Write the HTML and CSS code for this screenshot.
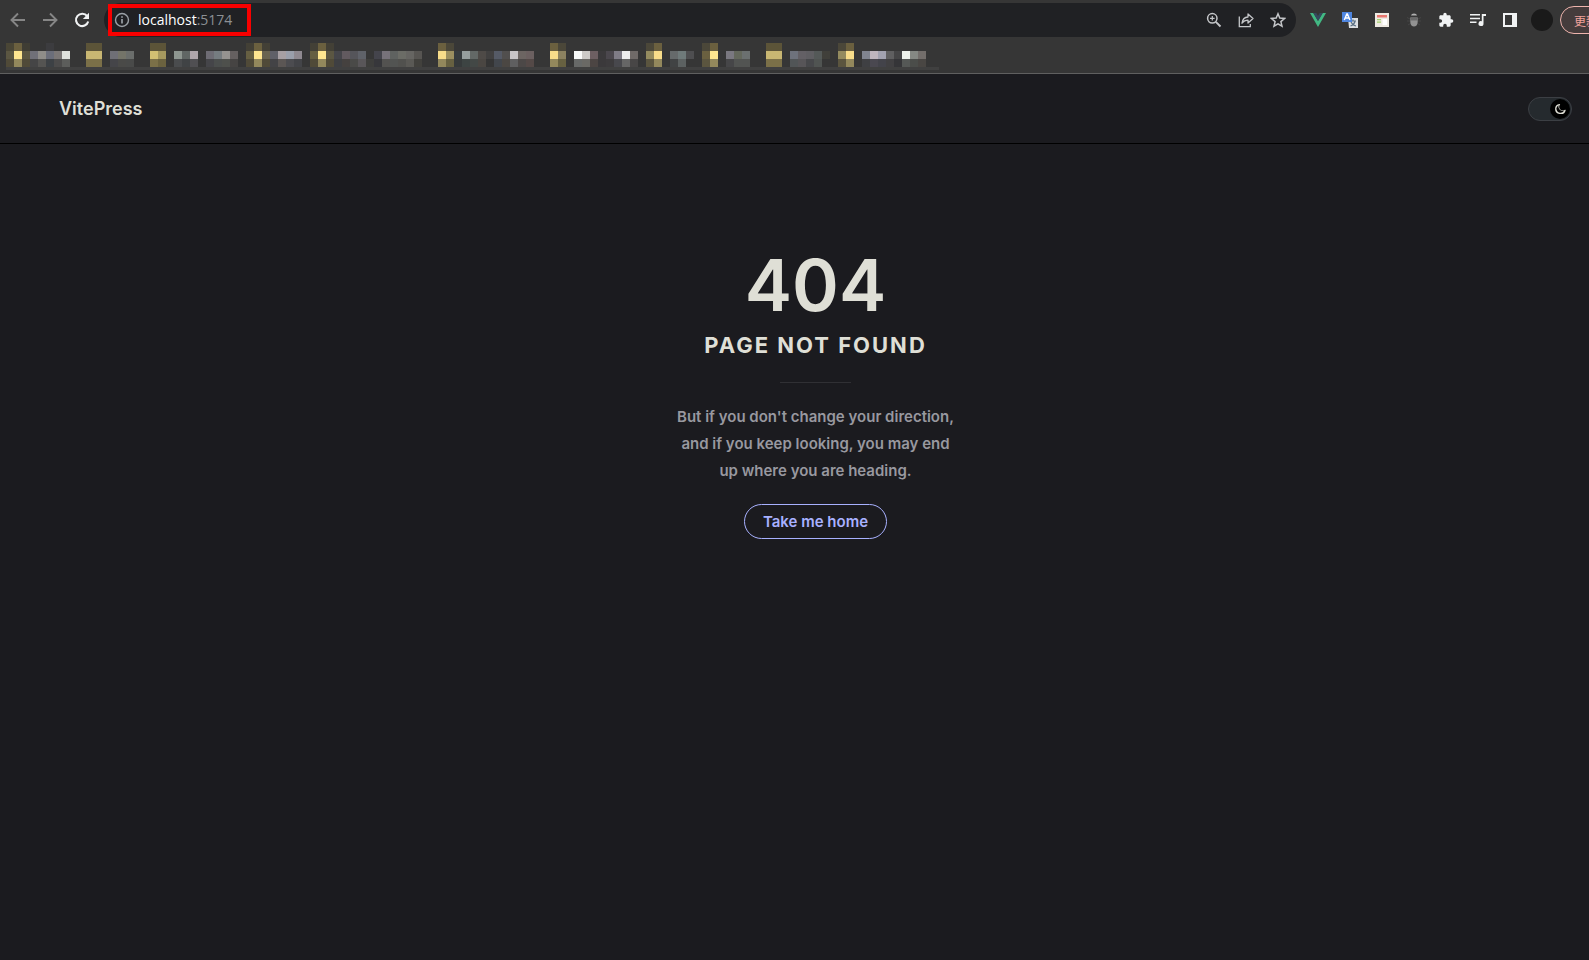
FILE: index.html
```html
<!DOCTYPE html>
<html lang="en">
<head>
<meta charset="utf-8">
<title>404 | VitePress</title>
<link rel="stylesheet" href="styles.css">
</head>
<body>
<div class="browser">
  <div class="toolbar">
    <div class="group history">
      <button class="tool dim" aria-label="Back"><svg viewBox="0 0 16 16"><path d="M15 8H2M8 1.5 1.5 8 8 14.500" fill="none" stroke="currentColor" stroke-width="1.900"/></svg></button>
      <button class="tool dim" aria-label="Forward"><svg viewBox="0 0 16 16"><path d="M1 8h13M8 1.500 14.500 8 8 14.500" fill="none" stroke="currentColor" stroke-width="1.900"/></svg></button>
      <button class="tool bright" aria-label="Reload"><svg viewBox="0 0 16 16"><path d="M13.200 4.200A6.200 6.200 0 1 0 14.200 9.500" fill="none" stroke="currentColor" stroke-width="2.100"/><path d="M15 .8V7H8.800z" fill="currentColor"/></svg></button>
    </div>
    <div class="address">
      <span class="site"><svg viewBox="0 0 16 16"><circle cx="8" cy="8" r="6.500" fill="none" stroke="currentColor" stroke-width="1.400"/><path d="M8 7v4.600M8 4.200v1.600" stroke="currentColor" stroke-width="1.700"/></svg></span>
      <a class="url" href="#">localhost<span class="port">:5174</span></a>
      <span class="highlight"></span>
      <button class="tool soft" aria-label="Zoom"><svg viewBox="0 0 16 16"><circle cx="6.300" cy="6.300" r="4.700" fill="none" stroke="currentColor" stroke-width="1.500"/><path d="m9.800 9.800 4.700 4.700" stroke="currentColor" stroke-width="1.900"/><path d="M6.300 4v4.600M4 6.300h4.600" stroke="currentColor" stroke-width="1.200"/></svg></button>
      <button class="tool soft" aria-label="Share"><svg viewBox="0 0 16 16"><path d="M1.300 4.500v10.200h11V12" fill="none" stroke="currentColor" stroke-width="1.300"/><path d="M4 11.200C4.500 7.500 6.500 5.200 10 5V2l5 4.500L10 11V8.200c-2.700 0-4.500 1-6 3z" fill="none" stroke="currentColor" stroke-width="1.300" stroke-linejoin="round"/></svg></button>
      <button class="tool soft" aria-label="Bookmark"><svg viewBox="0 0 16 16"><path d="m8 1.800 1.800 4.300 4.700.4-3.600 3.100 1.100 4.600L8 11.800l-4 2.400 1.100-4.600-3.600-3.100 4.700-.4z" fill="none" stroke="currentColor" stroke-width="1.500"/></svg></button>
    </div>
    <div class="group">
      <button class="tool" aria-label="Vue devtools"><svg viewBox="0 0 16 16"><path d="M0 1h3.300L8 9l4.700-8H16L8 15z" fill="#42b883"/><path d="M3.300 1h3L8 4l1.700-3h3L8 9z" fill="#35495e"/></svg></button>
      <button class="tool" aria-label="Translate"><svg viewBox="0 0 16 16"><path d="M6 6h10v10H7z" fill="#dcdfe2"/><path d="M8 9h6M11 7.500V9m2 .5c-.5 2-2 3.500-4.500 4.500M9 10c1 2 2.500 3.500 5 4" stroke="#5b7084" stroke-width="1.200" fill="none"/><path d="M0 0h10v10H0z" fill="#4f86e0"/><path d="m2.300 8 2.500-6h.6l2.500 6M3.300 6h3.600" fill="none" stroke="#fff" stroke-width="1.400"/></svg></button>
      <button class="tool" aria-label="Reader"><svg viewBox="0 0 16 16"><path d="M1 1h14v14H1z" fill="#eeeae2"/><path d="M3 3h10v2.500H3z" fill="#e87870"/><path d="M3 7.700h4M3 10.200h4" stroke="#a2d16b" stroke-width="1.200"/><path d="M8.500 7H13v6H8.500z" fill="#fff"/></svg></button>
      <button class="tool" aria-label="Debugger"><svg viewBox="0 0 16 16"><path d="M1 5.500 4 7m11-1.500L12 7M1 9h3m8 0h3M2 13l2.500-1.500M14 13l-2.500-1.500" stroke="#454545"/><path d="M5 3.500C5.500.7 10.500.7 11 3.500z" fill="#b0b0b0"/><path d="M4.300 5.500h7.400V10c0 6-7.400 6-7.400 0z" fill="#929292"/><path d="M4.500 5.500h7v3h-7z" fill="#6a6a6a"/></svg></button>
      <button class="tool bright" aria-label="Extensions"><svg viewBox="0 0 24 24"><path d="M20.500 11H19V7c0-1.100-.9-2-2-2h-4V3.500a2.500 2.500 0 0 0-5 0V5H4c-1.100 0-2 .9-2 2v3.800h1.500a2.700 2.700 0 0 1 0 5.400H2V20c0 1.100.9 2 2 2h3.800v-1.500a2.700 2.700 0 0 1 5.400 0V22H17c1.100 0 2-.9 2-2v-4h1.500a2.500 2.500 0 0 0 0-5z" fill="currentColor"/></svg></button>
      <button class="tool bright" aria-label="Media"><svg viewBox="0 0 16 16"><path d="M0 2.700h10M0 6.500h10M0 10.300h6.500" stroke="currentColor" stroke-width="1.600"/><path d="M16 1.900v2h-2.500v7.600a2.500 2.500 0 1 1-1.700-2.300V1.900z" fill="currentColor"/></svg></button>
      <button class="tool bright" aria-label="Side panel"><svg viewBox="0 0 16 16"><path d="M1 1h14v14H1zM3 3v10h7V3z" fill="currentColor" fill-rule="evenodd"/></svg></button>
      <button class="tool" aria-label="Profile"><span class="avatar"></span></button>
    </div>
    <div class="update-slot"><button class="update">更新</button></div>
  </div>
  <div class="bookmarks"><svg id="mosaic" class="mosaic" viewBox="0 0 933 28" shape-rendering="crispEdges" aria-hidden="true"></svg></div>
</div>
<header class="nav">
  <a class="brand" href="#">VitePress</a>
  <button class="switch" role="switch" aria-checked="true" aria-label="Dark mode"><span class="knob"><svg viewBox="0 0 24 24"><path d="M12.100 22h-.9a10 10 0 0 1-.1-19.900 1 1 0 0 1 .9 1.600 7 7 0 0 0 9.800 9.800 1 1 0 0 1 1.600.9A10 10 0 0 1 12.100 22zM9.300 4.400a8 8 0 1 0 10.300 11.500A9 9 0 0 1 9.300 4.400z" fill="currentColor"/></svg></span></button>
</header>
<main class="not-found">
  <p class="code">404</p>
  <h1 class="title">PAGE NOT FOUND</h1>
  <div class="divider"></div>
  <blockquote class="quote">But if you don't change your direction, and if you keep looking, you may end up where you are heading.</blockquote>
  <a class="home" href="#">Take me home</a>
</main>
<script src="mosaic.js"></script>
</body>
</html>
```

FILE: styles.css
```css
* { box-sizing: border-box; }
body {
  margin: 0;
  min-height: 100vh;
  overflow-x: hidden;
  background: #1b1b1f;
  color: #dfdfd6;
  font-family: Inter, "Noto Sans CJK SC", sans-serif;
}
button { border: 0; padding: 0; background: none; color: inherit; font: inherit; }
a { color: inherit; text-decoration: none; }
.browser { background: #363636; border-bottom: 1px solid #606060; }
.toolbar { display: flex; align-items: center; height: 40px; padding-left: 2px; overflow: hidden; }
.group { display: flex; flex: none; }
.history { margin-right: 6px; }
.tool { display: flex; flex: none; align-items: center; justify-content: center; width: 32px; height: 32px; }
.tool svg { width: 16px; height: 16px; }
.dim { color: #868686; }
.bright { color: #f1f3f4; }
.soft { color: #c4c6c9; }
.address {
  position: relative;
  display: flex;
  flex: 1;
  align-items: center;
  height: 34px;
  margin-right: 6px;
  padding: 0 2px 0 10px;
  border-radius: 17px;
  background: #202124;
}
.site { display: flex; width: 16px; height: 16px; color: #9aa0a6; }
.url {
  flex: 1;
  margin-left: 8px;
  color: #fff;
  font-family: "Open Sans", "Noto Sans", sans-serif;
  font-size: 14px;
  line-height: 20px;
}
.port { color: #8c9095; }
.highlight {
  position: absolute;
  top: 1px;
  left: 4px;
  width: 143px;
  height: 32px;
  border: 4px solid #f80000;
}
.avatar { width: 22px; height: 22px; border-radius: 50%; background: #1a1a1a; }
.update-slot { flex: none; width: 31px; padding-left: 2px; }
.update {
  width: 76px;
  height: 28px;
  padding-left: 13px;
  border: 1px solid #eeb4ad;
  border-radius: 14px;
  background: #453c3c;
  color: #f0a29b;
  font-family: "Noto Sans CJK SC", sans-serif;
  font-size: 12px;
  text-align: left;
}
.bookmarks { height: 33px; padding: 3px 6px 0; }
.mosaic { display: block; width: 933px; height: 28px; }
.nav {
  display: flex;
  align-items: center;
  justify-content: space-between;
  height: 70px;
  padding: 0 17px 0 59px;
  border-bottom: 1px solid #000;
}
.brand { font-size: 18px; font-weight: 600; line-height: 24px; }
.switch {
  display: flex;
  justify-content: flex-end;
  align-items: center;
  width: 44px;
  height: 24px;
  padding: 1px;
  border: 1px solid #3c3f44;
  border-radius: 12px;
  background: #252a2e;
}
.knob { display: flex; align-items: center; justify-content: center; width: 20px; height: 20px; border-radius: 50%; background: #000; }
.knob svg { width: 12px; height: 12px; }
.not-found {
  display: flex;
  flex-direction: column;
  align-items: center;
  padding: 106px 0 96px 42px;
  text-align: center;
}
.code { margin: 0; font-size: 71px; font-weight: 600; line-height: 70px; }
.title { margin: 14px 0 0; font-size: 22px; font-weight: 700; line-height: 22px; letter-spacing: 2px; }
.divider { width: 71px; height: 1px; margin: 26px 0 20px; background: #303034; }
.quote { max-width: 284px; margin: 0; color: #98989f; font-size: 15px; font-weight: 600; line-height: 27px; }
.home {
  margin-top: 20px;
  padding: 0 18px;
  border: 1px solid #a8b1ff;
  border-radius: 18px;
  color: #a8b1ff;
  font-size: 15px;
  font-weight: 600;
  line-height: 33px;
}
```

FILE: mosaic.js
```js
// Runs of pixel cells for the bookmark strip: row, first column, colours.
const CELL = 8;
const runs = [
  [0, 0, "4a4636 6b603f 3f3d34"], [0, 5, "3c3c3f"], [0, 10, "5c5438 5c5438"], [0, 18, "5c5438 5c5438"],
  [0, 30, "434036 6b603f 434036"], [0, 38, "434036 6b603f 434036"], [0, 54, "6b603f 4b4739"],
  [0, 68, "6b603f 4b4739"], [0, 80, "4b4739 6b603f"], [0, 87, "4b4739 6b603f"], [0, 95, "5c5438 5c5438"], [0, 104, "4b4739 6b603f"],
  [1, 0, "5b5642 ffe68f 5b5642 707078 8f8d89 6b6e7a 7b7776 dfe1dc"], [1, 10, "c8b672 c8b672"],
  [1, 13, "6f6f76 747469 6b6e6c"], [1, 18, "d2bf72 a6995f"], [1, 21, "8e9690 606664 afa6ab"],
  [1, 25, "6e6c74 757c80 959390 656060"], [1, 30, "665f42 ffe68f 6a6450 5f6068 a69fa3 9a9fab 8f8990"],
  [1, 38, "665f42 ffe68f 5b5642 45454a 625a5f 55555a 5f6269"], [1, 46, "44444c 77727a 5f6260 6b6c66 666562 575552"],
  [1, 54, "f8dd8a 9b8f60 363b3e 969e9e 636866 4e4a47 414040 555a66 514f4e c8c5c7 6c6562 6b6060"],
  [1, 68, "f8dd8a 8c8260"], [1, 71, "f8faf9 cccac7 6d5f62 3b393b 4b474d 7f7c86 eeeeee 6f6a68"],
  [1, 80, "948b5f f8dd8a"], [1, 83, "666a6b 6f7a7a 4e4e50"], [1, 87, "6a6040 ffe68f"], [1, 90, "7a7880 64685c 6b7070"],
  [1, 95, "c8b672 c8b672"], [1, 98, "6e727c 636065 5f5e62 545958 403f3a"], [1, 104, "948b5f f8dd8a"],
  [1, 107, "80848f bfb6be a2a2b0 5f5f60 454546 eef2ec 858883 736e6b"],
  [2, 0, "504a38 93885c 504a38 454546 555452 3d4145 4c4b4b 5c5d5b"], [2, 10, "7b7048 7b7048"], [2, 13, "454549 4a4a48 494a49"],
  [2, 18, "7b7048 6b623f"], [2, 21, "4a4c4e 404345 504f52"], [2, 25, "454549 4b4e4d 4e504c 464443"],
  [2, 30, "504a38 93885c 504a38 434346 5b5654 4c4c50 434448"],
  [2, 38, "504a38 93885c 504a38 3e3f42 45413f 4a4a48 595659 3e3e3c 37373b 535250 525452 51514e 5a5955 42413d"],
  [2, 54, "93885c 676141 363a3b 3d4443 434846 4a4642 353535 42464c 4b4743 5f5f60 4c4847 544947"],
  [2, 68, "93885c 676141"], [2, 71, "676968 6a6965 4c4543 3b393b 3d3b3d 48484d 666666 484646"],
  [2, 80, "5b553f 93885c"], [2, 83, "414344 5c6161"], [2, 87, "5b553f 93885c"], [2, 90, "464648 525452 525452"],
  [2, 95, "7b7048 7b7048"], [2, 98, "515557 575558 47484b 505452"], [2, 104, "5b553f 93885c"],
  [2, 107, "3f4043 4a4850 43434a 414042 353538 555856 4b4d4a 494643"]
];

const svg = document.getElementById("mosaic");
function cell(x, y, width, height, fill) {
  const rect = document.createElementNS("http://www.w3.org/2000/svg", "rect");
  Object.entries({ x, y, width, height, fill }).forEach(([key, value]) => rect.setAttribute(key, value));
  svg.append(rect);
}
cell(0, 24, 933, 3, "#404040");
runs.forEach(([row, column, colours]) => {
  colours.split(" ").forEach((colour, i) => cell((column + i) * CELL, row * CELL, CELL, CELL, "#" + colour));
});
```
